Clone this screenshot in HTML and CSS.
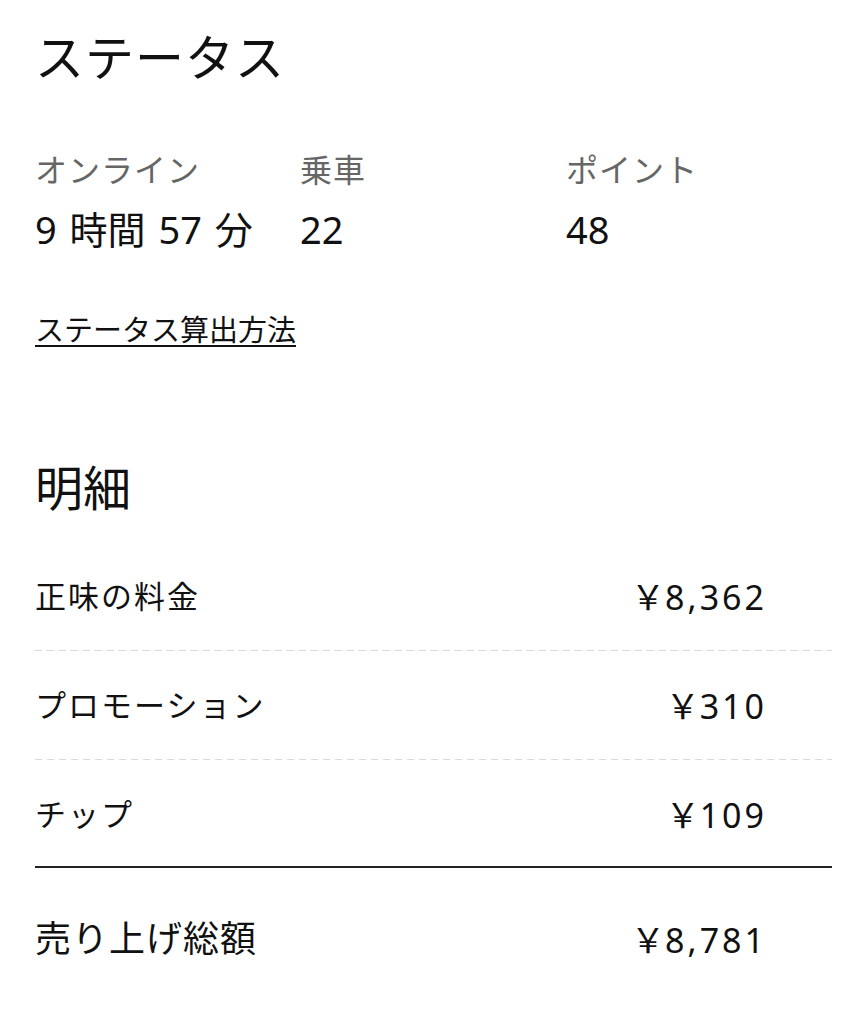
FILE: index.html
```html
<!DOCTYPE html>
<html lang="ja">
<head>
  <meta charset="UTF-8">
  <title>ステータス</title>
  <link rel="stylesheet" href="styles.css">
</head>
<body>
  <div class="page">
    <h1 class="title">ステータス</h1>

    <div class="stats">
      <div class="stat">
        <div class="stat-label">オンライン</div>
        <div class="stat-value">9 時間 57 分</div>
      </div>
      <div class="stat">
        <div class="stat-label">乗車</div>
        <div class="stat-value">22</div>
      </div>
      <div class="stat">
        <div class="stat-label">ポイント</div>
        <div class="stat-value">48</div>
      </div>
    </div>

    <a class="help-link" href="#">ステータス算出方法</a>

    <h2 class="section-title">明細</h2>

    <ul class="breakdown">
      <li class="row">
        <span class="row-label">正味の料金</span>
        <span class="row-amount"><span class="yen">￥</span>8,362</span>
      </li>
      <li class="row">
        <span class="row-label">プロモーション</span>
        <span class="row-amount"><span class="yen">￥</span>310</span>
      </li>
      <li class="row">
        <span class="row-label">チップ</span>
        <span class="row-amount"><span class="yen">￥</span>109</span>
      </li>
      <li class="row total">
        <span class="row-label">売り上げ総額</span>
        <span class="row-amount"><span class="yen">￥</span>8,781</span>
      </li>
    </ul>
  </div>
</body>
</html>
```

FILE: styles.css
```css
body {
  margin: 0;
  font-family: "Noto Sans", "Noto Sans CJK JP", sans-serif;
  background-color: #fff;
  color: #111;
}

.page {
  padding: 0 34px 0 35px;
}

.title {
  margin: 27px 0 0;
  font-size: 49px;
  font-weight: 400;
  line-height: 60px;
  letter-spacing: 1px;
}

.stats {
  display: grid;
  grid-template-columns: 265px 266px 1fr;
  margin-top: 63px;
}

.stat-label {
  font-size: 32px;
  line-height: 40px;
  color: #666;
  letter-spacing: 1px;
}

.stat-value {
  margin-top: 16px;
  font-size: 38px;
  line-height: 46px;
  word-spacing: 3px;
}

.help-link {
  display: inline-block;
  margin-top: 60px;
  font-size: 29px;
  line-height: 36px;
  color: #111;
  text-decoration: underline;
  text-underline-offset: 4px;
  text-decoration-thickness: 2px;
}

.section-title {
  margin: 112px 0 0;
  font-size: 48px;
  font-weight: 400;
  line-height: 56px;
}

.breakdown {
  list-style: none;
  margin: 26px 0 0;
  padding: 0;
}

.row {
  display: flex;
  justify-content: space-between;
  align-items: center;
  padding: 34px 65px 35px 0;
  font-size: 31px;
  line-height: 40px;
  letter-spacing: 2px;
  background: linear-gradient(to right, #d9d9d9 7px, transparent 7px) left bottom / 12px 1px repeat-x;
}

.row-amount {
  font-size: 34px;
  line-height: 30px;
  letter-spacing: 3px;
}

.yen {
  font-family: "Noto Sans CJK JP", sans-serif;
  letter-spacing: 0;
}

.row:nth-child(3) {
  padding-bottom: 32px;
  background: none;
  border-bottom: 2px solid #222;
}

.total {
  padding-top: 49px;
  background: none;
  font-size: 36px;
  line-height: 44px;
  letter-spacing: 1px;
}

.total .row-amount {
  font-size: 34px;
  line-height: 30px;
  letter-spacing: 3px;
}

.total .yen {
  letter-spacing: 0;
}
```
